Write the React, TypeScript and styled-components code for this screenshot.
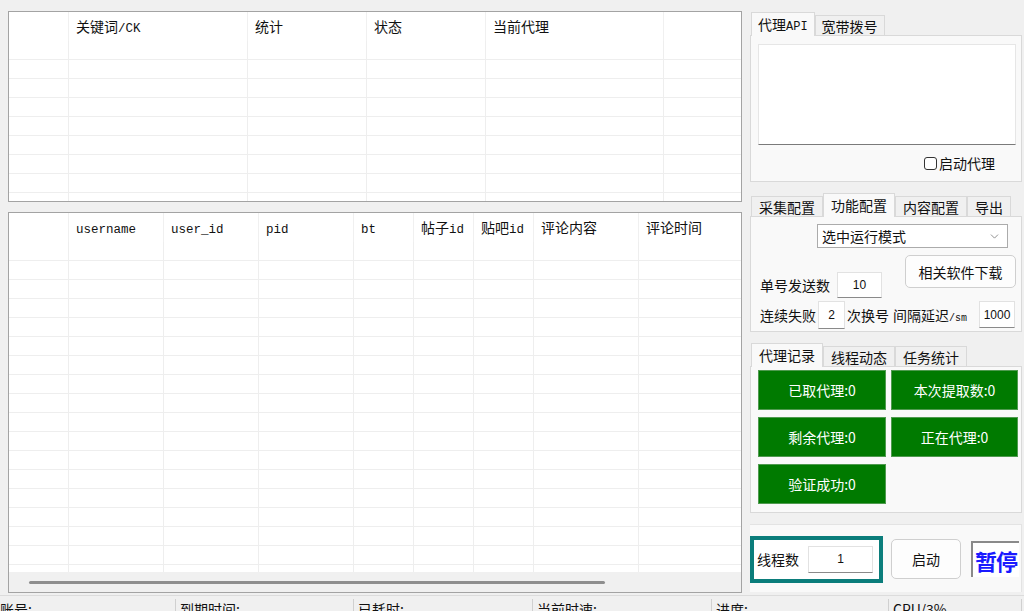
import React from 'react';
import styled, { createGlobalStyle } from 'styled-components';
import { ChevronDown } from 'lucide-react';

const Global = createGlobalStyle`
  html, body { margin: 0; padding: 0; background: #f0f0f0; }
  body { font-family: "Noto Sans CJK SC", "Liberation Sans", sans-serif; color: #000; }
  * { box-sizing: border-box; }
`;

const Root = styled.div`
  width: 1024px;
  height: 611px;
  overflow: hidden;
  background: #f0f0f0;
  display: flex;
  flex-direction: column;
`;

const Main = styled.div`
  display: flex;
  height: 595px;
  flex: none;
`;

const LeftCol = styled.div`
  width: 742px;
  padding: 11px 0 0 8px;
  display: flex;
  flex-direction: column;
  gap: 10px;
`;

const GridBox = styled.div<{ $h: number }>`
  height: ${p => p.$h}px;
  width: 734px;
  border: 1px solid #a3a3a3;
  background: #fff;
  display: flex;
  flex-direction: column;
  overflow: hidden;
  flex: none;
`;

const HeadRow = styled.div<{ $cols: string }>`
  display: grid;
  grid-template-columns: ${p => p.$cols};
  height: 29px;
  flex: none;
`;

const HeadCell = styled.div`
  padding-left: 7px;
  font-size: 14px;
  line-height: 29px;
  font-family: "Noto Sans CJK SC", sans-serif;
  white-space: nowrap;
  overflow: hidden;
  color: #111;
  border-left: 1px solid #f0f0f0;
  &:first-child { border-left: none; }
`;

const Lat = styled.span`
  font-family: "Liberation Mono", monospace;
  font-size: 12.5px;
`;

const Body = styled.div`
  flex: 1;
  overflow: hidden;
`;

const BodyRow = styled.div<{ $cols: string }>`
  display: grid;
  grid-template-columns: ${p => p.$cols};
  height: 19px;
  border-bottom: 1px solid #eeeeee;
`;

const BodyCell = styled.div`
  border-left: 1px solid #eeeeee;
  &:first-child { border-left: none; }
`;

const HScroll = styled.div`
  height: 20px;
  flex: none;
  background: #f0f0f0;
  display: flex;
  align-items: center;
  padding-left: 20px;
`;

const HThumb = styled.div`
  width: 576px;
  height: 3px;
  border-radius: 2px;
  background: #8e8e8e;
`;

const RightCol = styled.div`
  width: 272px;
  margin-left: 8px;
  padding-top: 12px;
  display: flex;
  flex-direction: column;
`;

const TabGroup = styled.div<{ $mb: number }>`
  display: flex;
  flex-direction: column;
  margin-bottom: ${p => p.$mb}px;
`;

const TabStrip = styled.div`
  display: flex;
  align-items: flex-end;
  height: 24px;
  padding-left: 1px;
`;

const Tab = styled.div<{ $active?: boolean; $pad?: number }>`
  position: relative;
  z-index: ${p => (p.$active ? 2 : 1)};
  height: ${p => (p.$active ? 24 : 21)}px;
  padding: 0 ${p => p.$pad ?? 7}px;
  background: ${p => (p.$active ? '#f9f9f9' : '#f0f0f0')};
  border: 1px solid #d9d9d9;
  border-bottom: none;
  font-size: 14px;
  line-height: ${p => (p.$active ? 22 : 20)}px;
  white-space: nowrap;
  color: #111;
`;

const TabLat = styled.span`
  font-family: "Liberation Mono", monospace;
  font-size: 12px;
`;

const Panel = styled.div<{ $h: number }>`
  position: relative;
  z-index: 1;
  margin-top: -1px;
  height: ${p => p.$h}px;
  background: #f9f9f9;
  border: 1px solid #d9d9d9;
`;

const ApiPanelBody = styled.div`
  padding: 8px 5px 0 7px;
  display: flex;
  flex-direction: column;
`;

const TextArea = styled.div`
  height: 101px;
  background: #fff;
  border: 1px solid #e6e6e6;
  border-bottom: 1px solid #7a7a7a;
`;

const CheckRow = styled.label`
  display: flex;
  align-items: center;
  justify-content: flex-end;
  gap: 2px;
  margin-top: 8px;
  padding-right: 21px;
  height: 20px;
  font-size: 14px;
  color: #111;
`;

const CheckBox = styled.span`
  width: 13px;
  height: 13px;
  border: 1px solid #333;
  border-radius: 3px;
  background: #fff;
`;

const ConfigBody = styled.div`
  padding: 7px 4px 0 9px;
  display: flex;
  flex-direction: column;
`;

const SelectBox = styled.div`
  margin-left: 57px;
  width: 191px;
  height: 24px;
  background: #fff;
  border: 1px solid #ababab;
  display: flex;
  align-items: center;
  justify-content: space-between;
  padding: 0 6px 0 4px;
  font-size: 14px;
  color: #111;
  svg { color: #777; }
`;

const RowA = styled.div`
  display: flex;
  justify-content: space-between;
  align-items: flex-start;
  margin-top: 7px;
  height: 43px;
  padding-right: 1px;
`;

const FieldGroup = styled.div`
  align-self: flex-end;
  display: flex;
  align-items: center;
  gap: 7px;
  font-size: 14px;
  color: #111;
`;

const SmallButton = styled.div<{ $w: number; $h: number }>`
  width: ${p => p.$w}px;
  height: ${p => p.$h}px;
  background: #fdfdfd;
  border: 1px solid #cfcfcf;
  border-radius: 5px;
  display: flex;
  align-items: center;
  justify-content: center;
  font-size: 14px;
  color: #111;
`;

const NumInput = styled.div<{ $w: number; $h: number; $ml?: number }>`
  width: ${p => p.$w}px;
  height: ${p => p.$h}px;
  margin-left: ${p => p.$ml ?? 0}px;
  background: #fff;
  border: 1px solid #e2e2e2;
  border-bottom: 1px solid #8a8a8a;
  display: flex;
  align-items: center;
  justify-content: center;
  font-family: "Liberation Sans", sans-serif;
  font-size: 12px;
  color: #111;
  flex: none;
`;

const RowB = styled.div`
  display: flex;
  align-items: center;
  margin-top: 2px;
  height: 29px;
  font-size: 14px;
  color: #111;
  white-space: nowrap;
`;

const Label = styled.span<{ $ml?: number }>`
  margin-left: ${p => p.$ml ?? 0}px;
`;

const Tiny = styled.span`
  font-family: "Liberation Mono", monospace;
  font-size: 10px;
`;

const StatGrid = styled.div`
  display: grid;
  grid-template-columns: 128px 127px;
  grid-auto-rows: 40px;
  column-gap: 5px;
  row-gap: 7px;
  padding: 3px 0 0 7px;
`;

const GreenBtn = styled.div`
  background: #007a00;
  border: 1px solid #4f9a4f;
  color: #fff;
  display: flex;
  align-items: center;
  justify-content: center;
  font-size: 14px;
`;

const RunPanel = styled.div`
  height: 68px;
  background: #f9f9f9;
  border-top: 1px solid #e3e3e3;
  border-right: 1px solid #e3e3e3;
  display: flex;
  align-items: center;
  padding-top: 1px;
`;

const ThreadBox = styled.div`
  width: 133px;
  height: 47px;
  border: 4px solid #0b7d7b;
  background: #fff;
  display: flex;
  align-items: center;
  padding-left: 3px;
  gap: 9px;
  font-size: 14px;
  color: #111;
`;

const StartBtn = styled(SmallButton)`
  margin-left: 8px;
`;

const PauseBox = styled.div`
  margin-left: 10px;
  width: 48px;
  height: 36px;
  background: #fff;
  border-left: 2px solid #8a8a8a;
  border-top: 2px solid #8a8a8a;
  display: flex;
  align-items: center;
  justify-content: center;
  overflow: hidden;
  font-size: 22px;
  font-weight: 700;
  color: #1a1aff;
  white-space: nowrap;
  letter-spacing: -1px;
`;

const StatusBar = styled.div`
  height: 16px;
  flex: none;
  border-top: 1px solid #dcdcdc;
  background: #f0f0f0;
  display: flex;
  padding-top: 3px;
`;

const StatusCell = styled.div<{ $w: number; $indent?: number }>`
  width: ${p => p.$w}px;
  flex: none;
  border-right: 1px solid #d0d0d0;
  padding-left: ${p => p.$indent ?? 4}px;
  font-size: 14px;
  line-height: 20px;
  color: #111;
  white-space: nowrap;
`;

const topCols = '59px 179px 119px 119px 178px 1fr';
const bottomCols = '59px 95px 95px 95px 60px 60px 60px 105px 1fr';

const topHeads: React.ReactNode[] = [
  '',
  <>关键词<Lat>/CK</Lat></>,
  '统计',
  '状态',
  '当前代理',
  '',
];

const bottomHeads: React.ReactNode[] = [
  '',
  <Lat>username</Lat>,
  <Lat>user_id</Lat>,
  <Lat>pid</Lat>,
  <Lat>bt</Lat>,
  <>帖子<Lat>id</Lat></>,
  <>贴吧<Lat>id</Lat></>,
  '评论内容',
  '评论时间',
];

function DataGrid({ h, cols, heads, rows, scroll }: { h: number; cols: string; heads: React.ReactNode[]; rows: number; scroll?: boolean }) {
  return (
    <GridBox $h={h}>
      <HeadRow $cols={cols}>
        {heads.map((t, i) => (
          <HeadCell key={i}>{t}</HeadCell>
        ))}
      </HeadRow>
      <Body>
        {Array.from({ length: rows }).map((_, r) => (
          <BodyRow key={r} $cols={cols}>
            {heads.map((_, c) => (
              <BodyCell key={c} />
            ))}
          </BodyRow>
        ))}
      </Body>
      {scroll && (
        <HScroll>
          <HThumb />
        </HScroll>
      )}
    </GridBox>
  );
}

export default function App() {
  return (
    <>
      <Global />
      <Root>
        <Main>
          <LeftCol>
            <DataGrid h={191} cols={topCols} heads={topHeads} rows={9} />
            <DataGrid h={381} cols={bottomCols} heads={bottomHeads} rows={18} scroll />
          </LeftCol>
          <RightCol>
            <TabGroup $mb={11}>
              <TabStrip>
                <Tab $active $pad={6}>代理<TabLat>API</TabLat></Tab>
                <Tab $pad={6}>宽带拨号</Tab>
              </TabStrip>
              <Panel $h={147}>
                <ApiPanelBody>
                  <TextArea />
                  <CheckRow>
                    <CheckBox />
                    启动代理
                  </CheckRow>
                </ApiPanelBody>
              </Panel>
            </TabGroup>

            <TabGroup $mb={11}>
              <TabStrip>
                <Tab>采集配置</Tab>
                <Tab $active>功能配置</Tab>
                <Tab>内容配置</Tab>
                <Tab>导出</Tab>
              </TabStrip>
              <Panel $h={116}>
                <ConfigBody>
                  <SelectBox>
                    <span>选中运行模式</span>
                    <ChevronDown size={13} strokeWidth={1.5} />
                  </SelectBox>
                  <RowA>
                    <FieldGroup>
                      单号发送数
                      <NumInput $w={45} $h={26}>10</NumInput>
                    </FieldGroup>
                    <SmallButton $w={111} $h={33}>相关软件下载</SmallButton>
                  </RowA>
                  <RowB>
                    <Label>连续失败</Label>
                    <NumInput $w={27} $h={28} $ml={2}>2</NumInput>
                    <Label $ml={2}>次换号</Label>
                    <Label $ml={4}>间隔延迟<Tiny>/sm</Tiny></Label>
                    <NumInput $w={36} $h={27} $ml={12}>1000</NumInput>
                  </RowB>
                </ConfigBody>
              </Panel>
            </TabGroup>

            <TabGroup $mb={11}>
              <TabStrip>
                <Tab $active>代理记录</Tab>
                <Tab>线程动态</Tab>
                <Tab>任务统计</Tab>
              </TabStrip>
              <Panel $h={147}>
                <StatGrid>
                  <GreenBtn>已取代理:0</GreenBtn>
                  <GreenBtn>本次提取数:0</GreenBtn>
                  <GreenBtn>剩余代理:0</GreenBtn>
                  <GreenBtn>正在代理:0</GreenBtn>
                  <GreenBtn>验证成功:0</GreenBtn>
                </StatGrid>
              </Panel>
            </TabGroup>

            <RunPanel>
              <ThreadBox>
                线程数
                <NumInput $w={65} $h={27}>1</NumInput>
              </ThreadBox>
              <StartBtn $w={70} $h={40}>启动</StartBtn>
              <PauseBox>暂停</PauseBox>
            </RunPanel>
          </RightCol>
        </Main>
        <StatusBar>
          <StatusCell $w={176} $indent={-1}>账号:</StatusCell>
          <StatusCell $w={178}>到期时间:</StatusCell>
          <StatusCell $w={179}>已耗时:</StatusCell>
          <StatusCell $w={179}>当前时速:</StatusCell>
          <StatusCell $w={177}>进度:</StatusCell>
          <StatusCell $w={133}>CPU/3%</StatusCell>
        </StatusBar>
      </Root>
    </>
  );
}
